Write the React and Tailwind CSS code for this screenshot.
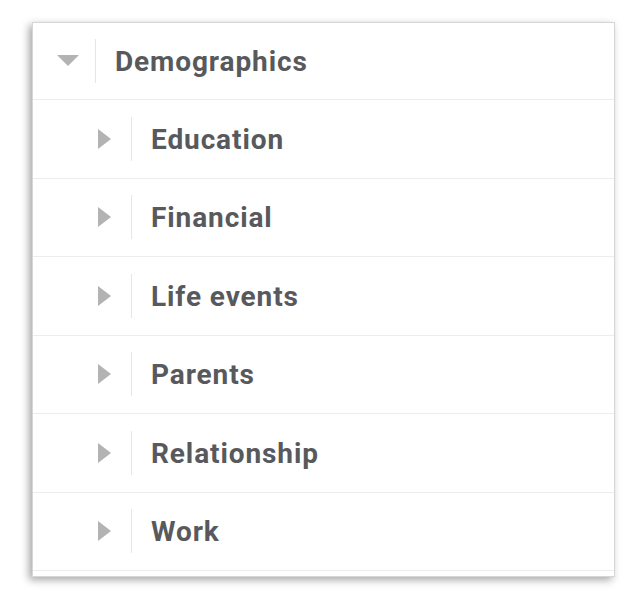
const items = ["Education", "Financial", "Life events", "Parents", "Relationship", "Work"];

function Row({ label, open }) {
  return (
    <div className={open ? "flex items-center h-[77px] border-b border-[#ececec]" : "flex items-center h-[78.5px] border-b border-[#ececec]"}>
      {open ? (
        <div className="pl-[24px] pr-[16px]">
          <svg width="22" height="12" viewBox="0 0 22 12" className="block">
            <path d="M0 0 L22 0 L11 11 Z" fill="#b3b3b3" />
          </svg>
        </div>
      ) : (
        <div className="pl-[65px] pr-[20px]">
          <svg width="13" height="20" viewBox="0 0 13 20" className="block">
            <path d="M0 0 L13 10 L0 20 Z" fill="#b3b3b3" />
          </svg>
        </div>
      )}
      <div className="h-[44px] border-l border-[#e6e6e6]" />
      <span className="pl-[19px] pt-[2px] text-[28px] tracking-[0.9px] font-bold text-[#58595c]">{label}</span>
    </div>
  );
}

export default function App() {
  return (
    <div className="w-[639px] h-[600px] bg-white pt-[22px] pl-[32px]" style={{ fontFamily: "Roboto, sans-serif" }}>
      <div className="w-[583px] h-[555px] bg-white border border-[#d6d6d6] shadow-[-3px_3px_8px_rgba(0,0,0,0.35)]">
        <Row label="Demographics" open />
        {items.map((it) => (
          <Row key={it} label={it} />
        ))}
      </div>
    </div>
  );
}
